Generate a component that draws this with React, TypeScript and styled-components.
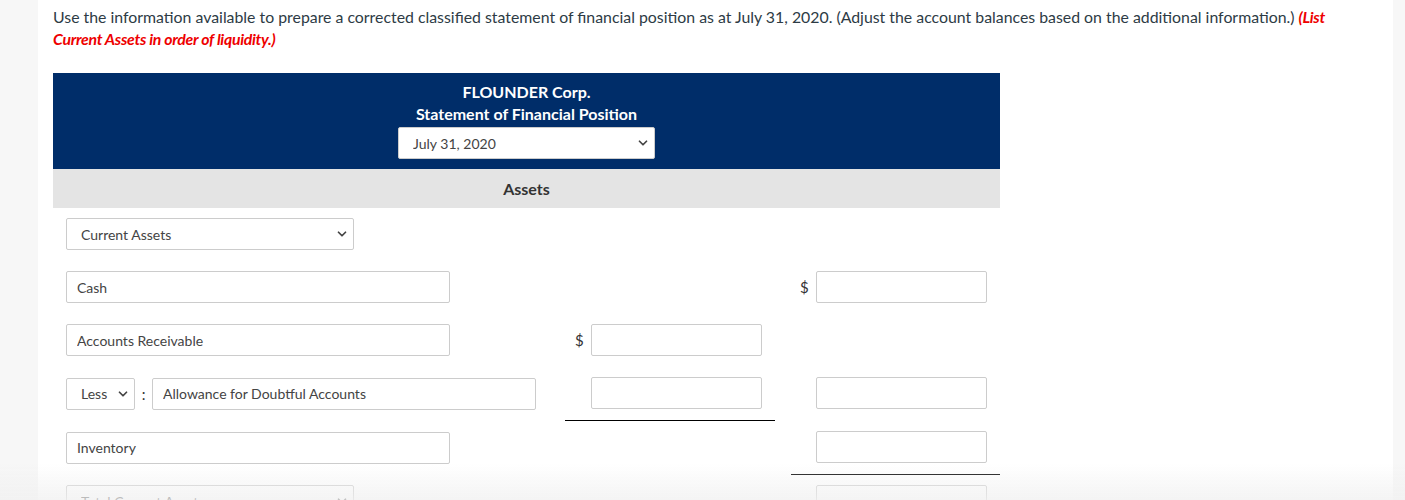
import React from "react";
import styled, { createGlobalStyle } from "styled-components";
import { ChevronDown } from "lucide-react";

const GlobalStyle = createGlobalStyle`
  html, body {
    margin: 0;
    padding: 0;
    background: #f7f7f7;
    font-family: Lato, "Open Sans", Arial, sans-serif;
  }
`;

const Page = styled.div`
  margin: 0 12px 0 38px;
  min-height: 500px;
  background: #ffffff;
  padding: 6px 15px 0;
  box-sizing: border-box;
`;

const Intro = styled.p`
  margin: 0;
  font-size: 15.85px;
  line-height: 22px;
  color: #2d3b45;
  width: 1290px;
`;

const Emphasis = styled.em`
  color: #ee0000;
  font-weight: 700;
  letter-spacing: -0.3px;
`;

const Sheet = styled.div`
  margin-top: 23px;
  width: 947px;
`;

const Header = styled.div`
  background: #002d69;
  color: #ffffff;
  display: flex;
  flex-direction: column;
  align-items: center;
  padding: 8px 0 10px;
  font-size: 16px;
  font-weight: 700;
  line-height: 22px;
`;

const SelectWrap = styled.div<{ $width: number }>`
  position: relative;
  width: ${(p) => p.$width}px;
  flex-shrink: 0;
`;

const Select = styled.select<{ $pad?: number }>`
  appearance: none;
  width: 100%;
  height: 32px;
  box-sizing: border-box;
  border: 1px solid #cccccc;
  border-radius: 2px;
  background: #ffffff;
  font-family: Lato, "Open Sans", Arial, sans-serif;
  font-size: 14px;
  color: #444444;
  padding: 0 0 0 ${(p) => p.$pad ?? 14}px;
  margin: 0;
`;

const Chevron = styled(ChevronDown)`
  position: absolute;
  right: 5px;
  top: 9px;
  color: #444444;
  pointer-events: none;
`;

const Band = styled.div`
  background: #e4e4e4;
  height: 39px;
  display: flex;
  align-items: center;
  justify-content: center;
  font-size: 16px;
  font-weight: 700;
  color: #333333;
`;

const Row = styled.div`
  display: grid;
  grid-template-columns: 512px 210px 16px 209px;
`;

const LabelCell = styled.div`
  display: flex;
  align-items: center;
  padding: 10px 0 11px 13px;
`;

const AmountCell = styled.div<{ $ruled?: boolean; $inset: number }>`
  display: flex;
  align-items: flex-start;
  padding: 10px 0 11px ${(p) => p.$inset}px;
  border-bottom: ${(p) => (p.$ruled ? "1px solid #000000" : "none")};
`;

const Dollar = styled.span<{ $show: boolean }>`
  width: 16px;
  line-height: 32px;
  font-size: 15px;
  color: #333333;
  visibility: ${(p) => (p.$show ? "visible" : "hidden")};
`;

const Field = styled.input<{ $width: number }>`
  width: ${(p) => p.$width}px;
  height: 32px;
  box-sizing: border-box;
  border: 1px solid #cccccc;
  border-radius: 2px;
  background: #ffffff;
  font-family: Lato, "Open Sans", Arial, sans-serif;
  font-size: 14px;
  color: #444444;
  padding: 0 10px;
  margin: 0;
  outline: none;
`;

const Colon = styled.span`
  width: 17px;
  text-align: center;
  font-size: 15px;
  color: #333333;
`;

const Fade = styled.div`
  position: fixed;
  left: 0;
  right: 0;
  bottom: 0;
  height: 36px;
  background: linear-gradient(rgba(240, 240, 240, 0), rgba(240, 240, 240, 0.75));
  pointer-events: none;
`;

type Amount = { dollar?: boolean; input?: boolean; ruled?: boolean };

interface LineProps {
  label: React.ReactNode;
  first?: Amount;
  second?: Amount;
}

const AmountBox = ({ a, inset }: { a?: Amount; inset: number }) => (
  <AmountCell $inset={inset} $ruled={a?.ruled}>
    {a?.input && (
      <>
        <Dollar $show={!!a.dollar}>$</Dollar>
        <Field $width={171} />
      </>
    )}
  </AmountCell>
);

const Line = ({ label, first, second }: LineProps) => (
  <Row>
    <LabelCell>{label}</LabelCell>
    <AmountBox a={first} inset={10} />
    <div />
    <AmountBox a={second} inset={9} />
  </Row>
);

const Dropdown = ({ width, value, pad }: { width: number; value: string; pad?: number }) => (
  <SelectWrap $width={width}>
    <Select $pad={pad} defaultValue={value}>
      <option>{value}</option>
    </Select>
    <Chevron size={14} strokeWidth={3} />
  </SelectWrap>
);

export default function App() {
  return (
    <>
      <GlobalStyle />
      <Page>
        <Intro>
          Use the information available to prepare a corrected classified statement of financial
          position as at July 31, 2020. (Adjust the account balances based on the additional
          information.) <Emphasis>(List Current Assets in order of liquidity.)</Emphasis>
        </Intro>
        <Sheet>
          <Header>
            <div>FLOUNDER Corp.</div>
            <div>Statement of Financial Position</div>
            <div style={{ marginTop: 2 }}>
              <Dropdown width={257} value="July 31, 2020" />
            </div>
          </Header>
          <Band>Assets</Band>
          <Line label={<Dropdown width={288} value="Current Assets" />} />
          <Line
            label={<Field $width={384} defaultValue="Cash" />}
            second={{ dollar: true, input: true }}
          />
          <Line
            label={<Field $width={384} defaultValue="Accounts Receivable" />}
            first={{ dollar: true, input: true }}
          />
          <Line
            label={
              <>
                <Dropdown width={69} value="Less" />
                <Colon>:</Colon>
                <Field $width={384} defaultValue="Allowance for Doubtful Accounts" />
              </>
            }
            first={{ input: true, ruled: true }}
            second={{ input: true }}
          />
          <Line
            label={<Field $width={384} defaultValue="Inventory" />}
            second={{ input: true, ruled: true }}
          />
          <Line
            label={<Dropdown width={288} value="Total Current Assets" />}
            second={{ input: true }}
          />
        </Sheet>
      </Page>
      <Fade />
    </>
  );
}
